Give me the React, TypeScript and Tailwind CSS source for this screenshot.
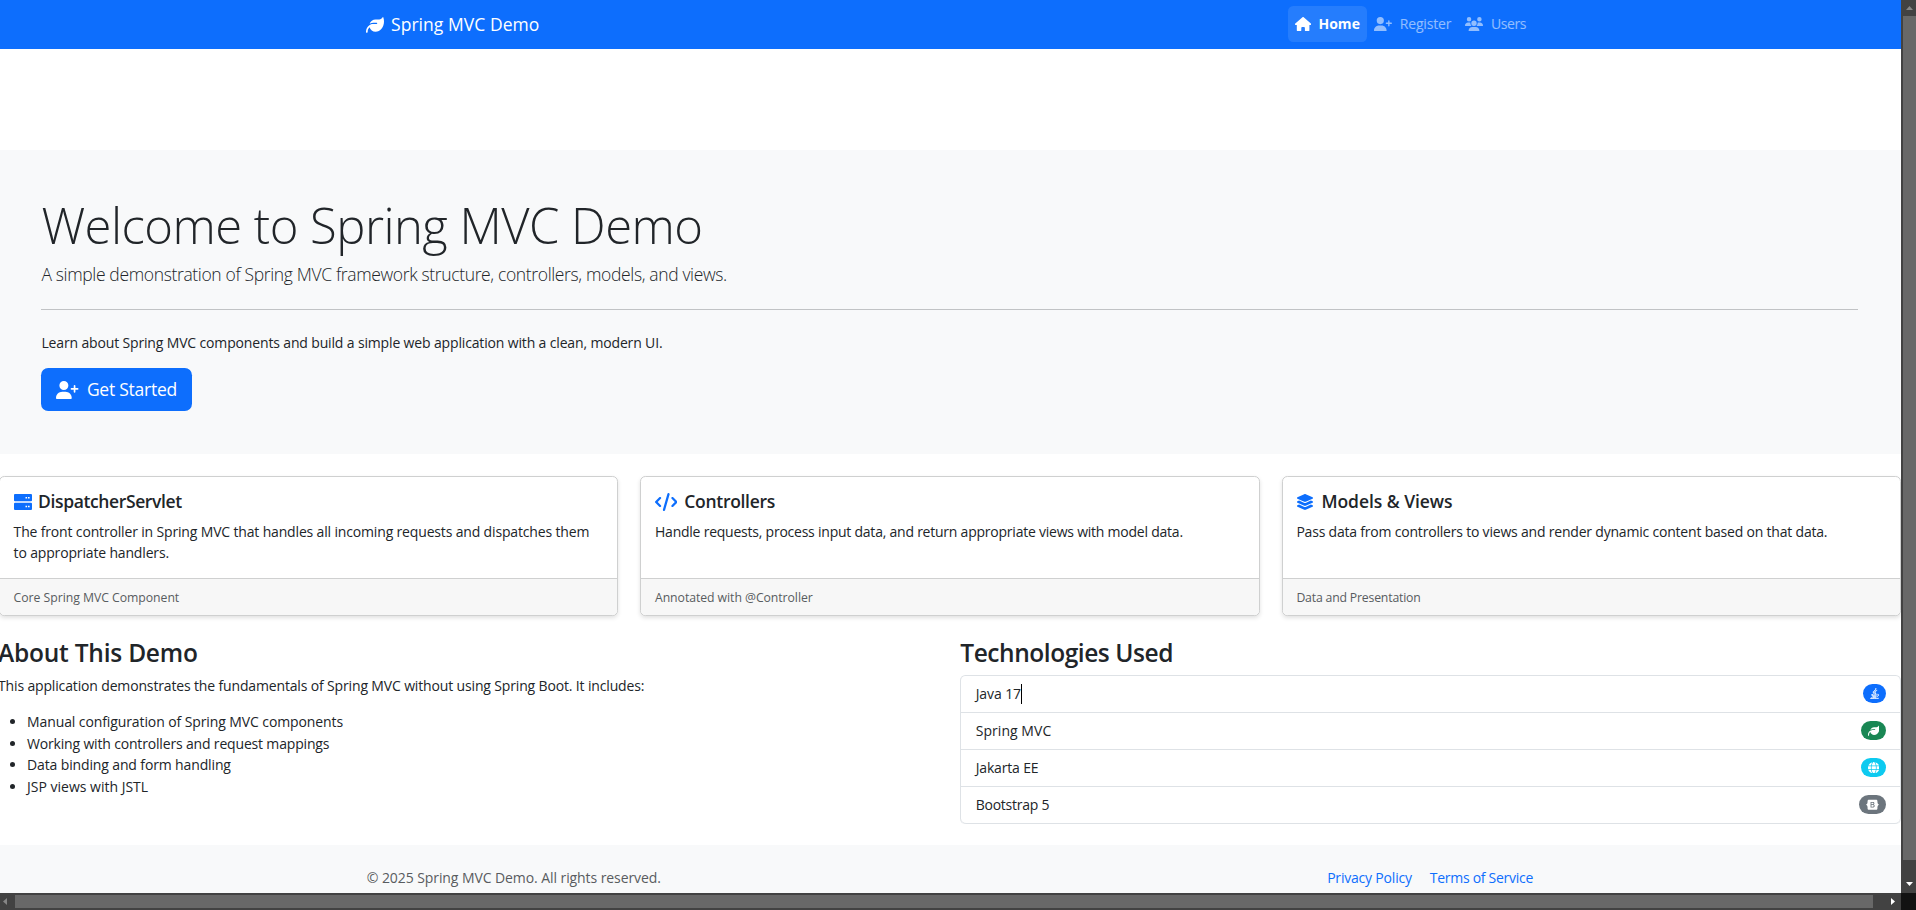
import type { ReactNode } from 'react';
import {
  FaBootstrap,
  FaCode,
  FaGlobe,
  FaHouse,
  FaJava,
  FaLayerGroup,
  FaLeaf,
  FaUserPlus,
  FaUsers,
} from 'react-icons/fa6';

function ServerIcon({ className }: { className: string }) {
  return (
    <svg className={className} viewBox="0 0 18 18">
      <rect x="0" y="1" width="18" height="7.3" rx="1" fill="currentColor" />
      <rect x="0" y="9.8" width="18" height="7.3" rx="1" fill="currentColor" />
      <path d="M11.500 4h1.600v1.500h-1.600zM14 4h1.600v1.500H14zM11.500 12.800h1.600v1.500h-1.600zM14 12.800h1.600v1.500H14z" fill="#fff" />
    </svg>
  );
}

function Navbar() {
  return (
    <nav className="flex h-[49px] shrink-0 bg-[#0d6efd]">
      <div className="mx-auto flex w-[1188px] items-start justify-between pt-[6px] pr-[11px] pl-[9.5px]">
        <a className="flex h-9 items-center pt-[1px] text-[17.5px] leading-[27px] tracking-[0.05px] whitespace-nowrap text-white">
          <FaLeaf className="mr-[7px] h-[18px] w-[18px]" />
          Spring MVC Demo
        </a>
        <div className="mr-[1px] flex items-center text-[14px] leading-[21.6px] text-white/55">
          <a className="flex h-9 w-[79px] items-center rounded-[5.4px] bg-white/10 pl-[7.2px] font-bold tracking-[0.05px] text-white">
            <FaHouse className="mr-[7.5px] h-[14.4px] w-[16.2px]" />
            Home
          </a>
          <a className="flex h-9 w-[91px] items-center pl-[7.2px] tracking-[-0.15px]">
            <FaUserPlus className="mr-[8px] h-[14.4px] w-[18px]" />
            Register
          </a>
          <a className="flex h-9 w-[75px] items-center pl-[7.2px] tracking-[-0.4px]">
            <FaUsers className="mr-[8.2px] h-[14.4px] w-[18px]" />
            Users
          </a>
        </div>
      </div>
    </nav>
  );
}

function Hero() {
  return (
    <header className="mt-[101px] h-[304px] shrink-0 bg-[#f8f9fa] pt-[44.6px] pr-[43px] pl-[41.4px] whitespace-nowrap">
      <h1 className="mb-[5.8px] text-[49px] leading-[60.5px] font-light tracking-[-0.53px]">
        Welcome to Spring MVC Demo
      </h1>
      <p className="text-[17.5px] leading-[27px] font-light tracking-[-0.355px]">
        A simple demonstration of Spring MVC framework structure, controllers, models, and views.
      </p>
      <hr className="my-[21.4px] border-t border-[#c1c3c5]" />
      <p className="mb-[14.4px] text-[14px] leading-[21.6px] tracking-[-0.15px]">
        Learn about Spring MVC components and build a simple web application with a clean, modern UI.
      </p>
      <a className="flex h-[43px] w-[151px] items-center rounded-[7.2px] bg-[#0d6efd] pt-[1px] pl-[15px] text-[17.5px] tracking-[-0.25px] text-white">
        <FaUserPlus className="mr-[8px] h-[18px] w-[22.5px]" />
        Get Started
      </a>
    </header>
  );
}

interface CardProps {
  icon: ReactNode;
  title: ReactNode;
  footer: ReactNode;
  children: ReactNode;
}

function Card({ icon, title, footer, children }: CardProps) {
  return (
    <article className="flex flex-col rounded-[5.4px] border border-[#cfd0d0] bg-white shadow-[0_2px_4px_rgba(0,0,0,0.12)]">
      <div className="h-[101px] px-[13.6px] pt-[14.4px] text-[14px]">
        <h5 className="mb-[7.8px] flex h-[21.6px] items-center text-[17.5px] font-semibold">
          {icon}
          {title}
        </h5>
        <p className="leading-[21.6px]">{children}</p>
      </div>
      <div className="flex-1 rounded-b-[4.4px] border-t border-[#cfd0d0] bg-[#f7f7f7] px-[13.6px] pt-[8px] text-[12.25px] leading-[21.6px] text-[#585c60]">
        {footer}
      </div>
    </article>
  );
}

function Cards() {
  return (
    <section className="mt-[22px] -ml-px grid h-[139.7px] w-[1902px] shrink-0 grid-cols-3 gap-[22.2px]">
      <Card
        icon={<ServerIcon className="mr-[6.5px] h-[18px] w-[18px] text-[#0d6efd]" />}
        title={<span className="tracking-[-0.38px]">DispatcherServlet</span>}
        footer={<span className="tracking-[-0.04px]">Core Spring MVC Component</span>}
      >
        <span className="tracking-[-0.16px]">
          The front controller in Spring MVC that handles all incoming requests and dispatches them
          <br />
          to appropriate handlers.
        </span>
      </Card>
      <Card
        icon={<FaCode className="mr-[6.8px] h-[18px] w-[22.5px] text-[#0d6efd]" />}
        title={<span className="tracking-[-0.3px]">Controllers</span>}
        footer={<span className="tracking-[-0.06px]">Annotated with @Controller</span>}
      >
        <span className="tracking-[-0.23px]">
          Handle requests, process input data, and return appropriate views with model data.
        </span>
      </Card>
      <Card
        icon={<FaLayerGroup className="mr-[7px] h-[18px] w-[18px] text-[#0d6efd]" />}
        title={<span className="tracking-[-0.05px]">Models &amp; Views</span>}
        footer={<span className="tracking-[-0.18px]">Data and Presentation</span>}
      >
        <span className="tracking-[-0.2px]">
          Pass data from controllers to views and render dynamic content based on that data.
        </span>
      </Card>
    </section>
  );
}

function About() {
  return (
    <div>
      <h3 className="mt-[1px] mb-[6.7px] -ml-px text-[24.5px] leading-[30.2px] font-semibold tracking-[-0.22px]">
        About This Demo
      </h3>
      <p className="mb-[14.4px] -ml-px tracking-[-0.15px]">
        This application demonstrates the fundamentals of Spring MVC without using Spring Boot. It includes:
      </p>
      <ul className="list-disc pl-[28px]">
        <li className="tracking-[-0.1px]">Manual configuration of Spring MVC components</li>
        <li className="tracking-[-0.17px]">Working with controllers and request mappings</li>
        <li className="tracking-[-0.13px]">Data binding and form handling</li>
        <li>JSP views with JSTL</li>
      </ul>
    </div>
  );
}

interface TechnologyProps {
  name: ReactNode;
  icon: ReactNode;
  badgeClass: string;
}

function Technology({ name, icon, badgeClass }: TechnologyProps) {
  return (
    <li className="flex h-[37px] items-center justify-between border-b border-[#dee2e6] pr-[14px] pl-[14.4px] last:rounded-b-[5.4px]">
      {name}
      <span className={`flex h-[18.6px] items-center rounded-full px-[6.8px] text-white ${badgeClass}`}>{icon}</span>
    </li>
  );
}

function Technologies() {
  return (
    <div>
      <h3 className="mt-[1px] mb-[6.2px] text-[24.5px] leading-[30.2px] font-semibold tracking-[-0.45px]">
        Technologies Used
      </h3>
      <ul className="rounded-[5.4px] border border-b-0 border-[#dee2e6]">
        <Technology
          name={
            <span className="flex items-center tracking-[-0.1px]">
              Java 17
              <span className="h-5 w-px bg-black" />
            </span>
          }
          icon={<FaJava className="h-[11.5px] w-[9.2px] stroke-white stroke-[22px]" />}
          badgeClass="bg-[#0d6efd]"
        />
        <Technology
          name={<span className="tracking-[0.05px]">Spring MVC</span>}
          icon={<FaLeaf className="h-[11.5px] w-[11.5px]" />}
          badgeClass="bg-[#198754]"
        />
        <Technology
          name={<span className="tracking-[-0.16px]">Jakarta EE</span>}
          icon={<FaGlobe className="h-[11.5px] w-[11.5px]" />}
          badgeClass="bg-[#0dcaf0]"
        />
        <Technology
          name={<span className="tracking-[-0.25px]">Bootstrap 5</span>}
          icon={<FaBootstrap className="h-[11.5px] w-[13px]" />}
          badgeClass="bg-[#6c757d]"
        />
      </ul>
    </div>
  );
}

function Footer() {
  return (
    <footer className="mt-[21.6px] flex-1 bg-[#f8f9fa] pt-[22px] whitespace-nowrap">
      <div className="mx-auto flex w-[1188px] justify-between pr-[11.5px] pl-[10.3px]">
        <span className="tracking-[-0.08px] text-[#585c60]">© 2025 Spring MVC Demo. All rights reserved.</span>
        <div className="flex gap-[18px] text-[#0d6efd]">
          <a className="tracking-[-0.2px]">Privacy Policy</a>
          <a className="tracking-[-0.28px]">Terms of Service</a>
        </div>
      </div>
    </footer>
  );
}

function VerticalScrollbar() {
  return (
    <div className="flex flex-col items-end bg-[#424242]">
      <svg className="h-4 w-[15px]" viewBox="0 0 15 16">
        <path d="M5 10h7L8.500 6z" fill="#868686" />
      </svg>
      <div className="h-[844px] w-[13px] bg-[#686868]" />
      <svg className="h-[33px] w-[15px]" viewBox="0 0 15 33">
        <path d="M5 22h7l-3.500 4z" fill="#fff" />
      </svg>
    </div>
  );
}

function HorizontalScrollbar() {
  return (
    <div className="flex items-center bg-[#424242]">
      <svg className="h-[17px] w-[15px]" viewBox="0 0 15 17">
        <path d="M7 5v7L3 8.500z" fill="#868686" />
      </svg>
      <div className="h-[13px] w-[1858px] bg-[#686868]" />
      <svg className="h-[17px] w-7" viewBox="0 0 28 17">
        <path d="M18 5v7l4-3.500z" fill="#fff" />
      </svg>
    </div>
  );
}

export default function App() {
  return (
    <div className="grid h-[910px] w-[1916px] grid-cols-[1901px_15px] grid-rows-[893px_17px] overflow-hidden bg-white font-['Open_Sans','Noto_Sans',sans-serif] text-[#212529]">
      <div className="flex min-w-0 flex-col overflow-hidden text-[14px] leading-[21.6px]">
        <Navbar />
        <Hero />
        <Cards />
        <section className="mt-[21.6px] -ml-px grid w-[1902px] shrink-0 grid-cols-2 gap-[20.6px]">
          <About />
          <Technologies />
        </section>
        <Footer />
      </div>
      <VerticalScrollbar />
      <HorizontalScrollbar />
      <div className="bg-[#121212]" />
    </div>
  );
}
